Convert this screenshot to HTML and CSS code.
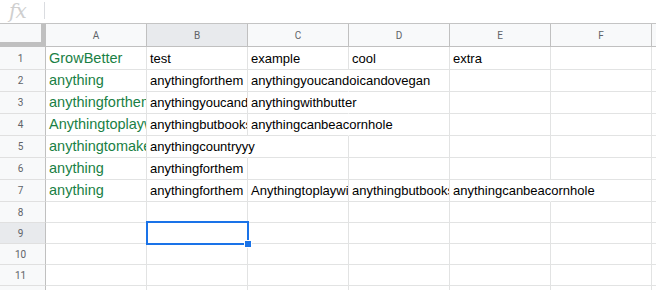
FILE: index.html
```
<!DOCTYPE html>
<html>
<head>
<meta charset="utf-8">
<link rel="stylesheet" href="styles.css">
</head>
<body>
<div class="formula-bar">
  <span class="fx">fx</span>
  <span class="fx-sep"></span>
</div>
<div class="sheet">
  <div class="corner"></div>
  <div class="col-head">A</div>
  <div class="col-head active">B</div>
  <div class="col-head">C</div>
  <div class="col-head">D</div>
  <div class="col-head">E</div>
  <div class="col-head">F</div>
  <div class="col-head last"></div>

  <div class="row-head">1</div>
  <div class="cell green">GrowBetter</div>
  <div class="cell">test</div>
  <div class="cell">example</div>
  <div class="cell">cool</div>
  <div class="cell">extra</div>
  <div class="cell"></div>
  <div class="cell"></div>

  <div class="row-head">2</div>
  <div class="cell green">anything</div>
  <div class="cell">anythingforthem</div>
  <div class="cell spill">anythingyoucandoicandovegan</div>
  <div class="cell"></div>
  <div class="cell"></div>
  <div class="cell"></div>
  <div class="cell"></div>

  <div class="row-head">3</div>
  <div class="cell green">anythingforthem</div>
  <div class="cell">anythingyoucandoit</div>
  <div class="cell spill">anythingwithbutter</div>
  <div class="cell"></div>
  <div class="cell"></div>
  <div class="cell"></div>
  <div class="cell"></div>

  <div class="row-head">4</div>
  <div class="cell green">Anythingtoplaywith</div>
  <div class="cell">anythingbutbooks</div>
  <div class="cell spill">anythingcanbeacornhole</div>
  <div class="cell"></div>
  <div class="cell"></div>
  <div class="cell"></div>
  <div class="cell"></div>

  <div class="row-head">5</div>
  <div class="cell green">anythingtomakeit</div>
  <div class="cell spill">anythingcountryyy</div>
  <div class="cell"></div>
  <div class="cell"></div>
  <div class="cell"></div>
  <div class="cell"></div>
  <div class="cell"></div>

  <div class="row-head">6</div>
  <div class="cell green">anything</div>
  <div class="cell">anythingforthem</div>
  <div class="cell"></div>
  <div class="cell"></div>
  <div class="cell"></div>
  <div class="cell"></div>
  <div class="cell"></div>

  <div class="row-head">7</div>
  <div class="cell green">anything</div>
  <div class="cell">anythingforthem</div>
  <div class="cell">Anythingtoplaywith</div>
  <div class="cell">anythingbutbooks</div>
  <div class="cell spill">anythingcanbeacornhole</div>
  <div class="cell"></div>
  <div class="cell"></div>

  <div class="row-head">8</div>
  <div class="cell"></div><div class="cell"></div><div class="cell"></div><div class="cell"></div><div class="cell"></div><div class="cell"></div><div class="cell"></div>

  <div class="row-head active">9</div>
  <div class="cell"></div>
  <div class="cell selected"><div class="selection"><div class="handle"></div></div></div>
  <div class="cell"></div><div class="cell"></div><div class="cell"></div><div class="cell"></div><div class="cell"></div>

  <div class="row-head">10</div>
  <div class="cell"></div><div class="cell"></div><div class="cell"></div><div class="cell"></div><div class="cell"></div><div class="cell"></div><div class="cell"></div>

  <div class="row-head">11</div>
  <div class="cell"></div><div class="cell"></div><div class="cell"></div><div class="cell"></div><div class="cell"></div><div class="cell"></div><div class="cell"></div>

  <div class="row-head"></div>
  <div class="cell"></div><div class="cell"></div><div class="cell"></div><div class="cell"></div><div class="cell"></div><div class="cell"></div><div class="cell"></div>
</div>
</body>
</html>
```

FILE: styles.css
```
* { box-sizing: border-box; }
html, body {
  margin: 0;
  padding: 0;
  background: #fff;
  overflow: hidden;
  width: 656px;
  height: 290px;
}
body {
  font-family: "Liberation Sans", Arial, sans-serif;
}
.formula-bar {
  height: 24px;
  border-bottom: 1px solid #c4c4c4;
  display: flex;
  align-items: center;
}
.fx {
  font-family: "DejaVu Serif", "Liberation Serif", serif;
  font-style: italic;
  font-size: 20px;
  color: #cfcfcf;
  width: 44px;
  padding-left: 9px;
  line-height: 23px;
  letter-spacing: -1px;
}
.fx-sep {
  width: 1px;
  height: 17px;
  background: #dadce0;
  margin-top: -2px;
}
.sheet {
  display: grid;
  grid-template-columns: 46px repeat(6, 101px) 1fr;
  grid-template-rows: 23px 23px repeat(6, 22px) repeat(4, 21px) 6px;
}
.corner {
  background: #f8f9fa;
  border-right: 5px solid #c0c0c0;
  border-bottom: 5px solid #c0c0c0;
}
.col-head {
  background: #f8f9fa;
  border-right: 1px solid #c0c0c0;
  border-bottom: 1px solid #c0c0c0;
  font-family: Roboto, "Liberation Sans", sans-serif;
  font-size: 10px;
  color: #5f6368;
  display: flex;
  align-items: center;
  justify-content: center;
}
.col-head.last { border-right: none; }
.col-head.active { background: #e8eaed; }
.row-head {
  background: #f8f9fa;
  border-right: 1px solid #c0c0c0;
  border-bottom: 1px solid #e0e0e0;
  font-family: Roboto, "Liberation Sans", sans-serif;
  font-size: 10px;
  color: #5f6368;
  display: flex;
  align-items: center;
  justify-content: center;
  padding-right: 4px;
}
.row-head.active { background: #e8eaed; }
.cell {
  border-right: 1px solid #e2e3e3;
  border-bottom: 1px solid #e2e3e3;
  font-size: 13px;
  line-height: 16px;
  color: #000;
  padding: 0 3px 2px 3px;
  display: flex;
  align-items: flex-end;
  white-space: nowrap;
  overflow: hidden;
  min-width: 0;
}
.cell.green {
  color: #1a7f45;
  font-size: 14.5px;
  line-height: 17px;
}
.cell.spill {
  overflow: visible;
  border-right-color: transparent;
  position: relative;
  z-index: 1;
}
.cell.selected {
  position: relative;
  overflow: visible;
  z-index: 2;
}
.selection {
  position: absolute;
  left: -1px;
  top: -2px;
  right: -2px;
  bottom: -2px;
  border: 2px solid #1a73e8;
}
.handle {
  position: absolute;
  right: -5px;
  bottom: -5px;
  width: 8px;
  height: 8px;
  background: #1a73e8;
  border: 1px solid #fff;
}
```
